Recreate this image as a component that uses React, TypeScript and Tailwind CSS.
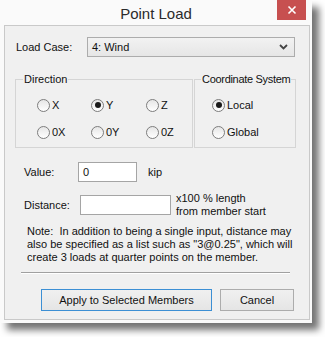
import React from "react";

const font = { fontFamily: '"Liberation Sans", Arial, sans-serif' };

function Radio({ checked, label }: { checked?: boolean; label: string }) {
  return (
    <div className="flex items-center h-[14px]">
      <span className="w-[13px] h-[13px] rounded-full border border-[#7d7d7d] bg-gradient-to-b from-[#e6e6e6] to-[#ffffff] flex items-center justify-center">
        {checked && <span className="w-[6px] h-[6px] rounded-full bg-[#1a1a1a]" />}
      </span>
      <span className="ml-[2px]">{label}</span>
    </div>
  );
}

export default function App() {
  return (
    <div className="w-[325px] h-[337px] bg-white text-[11px] text-[#111] leading-[13px]" style={font}>
      <div className="w-[312px] h-[323px] bg-[#fafafa] flex flex-col shadow-[7px_7px_7px_rgba(0,0,0,0.55)]">
        {/* title bar */}
        <div className="relative h-[25px] flex items-center justify-center shrink-0">
          <span className="text-[15px] leading-[18px] text-[#2b2b2b] mt-[2px]">Point Load</span>
          <div className="absolute right-[6px] top-0 w-[29px] h-[20px] bg-[#c75050] flex items-center justify-center">
            <svg width="10" height="10" viewBox="0 0 10 10">
              <path d="M1.5 1.5 L8.5 8.5 M8.5 1.5 L1.5 8.5" stroke="white" strokeWidth="1.6" />
            </svg>
          </div>
        </div>
        {/* client */}
        <div className="ml-[4px] mr-[2px] mb-[3px] flex-1 border border-[#c9c9c9] bg-[#f0f0f0] flex flex-col">
          {/* Load case */}
          <div className="mt-[11px] ml-[11px] flex items-center h-[20px]">
            <span className="w-[71px]">Load Case:</span>
            <div className="w-[208px] h-[20px] border border-[#acacac] bg-gradient-to-b from-[#f2f2f2] to-[#e6e6e6] flex items-center justify-between pl-[4px] pr-[6px]">
              <span>4: Wind</span>
              <svg width="9" height="6" viewBox="0 0 9 6">
                <path d="M1 1 L4.5 4.5 L8 1" stroke="#444" strokeWidth="1.8" fill="none" />
              </svg>
            </div>
          </div>
          {/* groups */}
          <div className="mt-[15px] ml-[10px] flex">
            <fieldset className="w-[178px] h-[76px] border border-[#d5d5d5]">
              <legend className="ml-[7px] px-[1px] leading-[14px]">Direction</legend>
              <div className="pl-[21px] pt-[12px] grid grid-cols-[54px_55px_auto] gap-y-[13px]">
                <Radio label="X" />
                <Radio label="Y" checked />
                <Radio label="Z" />
                <Radio label="0X" />
                <Radio label="0Y" />
                <Radio label="0Z" />
              </div>
            </fieldset>
            <fieldset className="ml-[1px] w-[102px] h-[76px] border border-[#d5d5d5]">
              <legend className="ml-[6px] px-[1px] leading-[14px] whitespace-nowrap tracking-[-0.3px]">Coordinate System</legend>
              <div className="pl-[17px] pt-[12px] flex flex-col gap-y-[13px]">
                <Radio label="Local" checked />
                <Radio label="Global" />
              </div>
            </fieldset>
          </div>
          {/* value */}
          <div className="mt-[14px] ml-[19px] flex items-center h-[20px]">
            <span className="w-[54px]">Value:</span>
            <div className="w-[59px] h-[20px] border border-[#a5a5a5] bg-white flex items-center pl-[4px]">0</div>
            <span className="ml-[11px]">kip</span>
          </div>
          {/* distance */}
          <div className="mt-[10px] ml-[19px] flex items-center">
            <span className="w-[56px]">Distance:</span>
            <div className="w-[91px] h-[20px] border border-[#a5a5a5] bg-white" />
            <div className="ml-[5px] flex flex-col">
              <span>x100 % length</span>
              <span>from member start</span>
            </div>
          </div>
          {/* note */}
          <div className="mt-[7px] ml-[22px] flex flex-col whitespace-pre">
            <span>Note:  In addition to being a single input, distance may</span>
            <span>also be specified as a list such as "3@0.25", which will</span>
            <span>create 3 loads at quarter points on the member.</span>
          </div>
          {/* separator */}
          <div className="mt-[8px] ml-[16px] w-[269px] h-[2px] border-t border-[#a0a0a0] border-b border-b-white" />
          {/* buttons */}
          <div className="mt-[15px] ml-[36px] flex">
            <div className="w-[171px] h-[22px] border border-[#3c8fd4] bg-gradient-to-b from-[#f0f0f0] to-[#e5e5e5] flex items-center justify-center">
              Apply to Selected Members
            </div>
            <div className="ml-[8px] w-[74px] h-[22px] border border-[#acacac] bg-gradient-to-b from-[#f0f0f0] to-[#e5e5e5] flex items-center justify-center">
              Cancel
            </div>
          </div>
        </div>
      </div>
    </div>
  );
}
